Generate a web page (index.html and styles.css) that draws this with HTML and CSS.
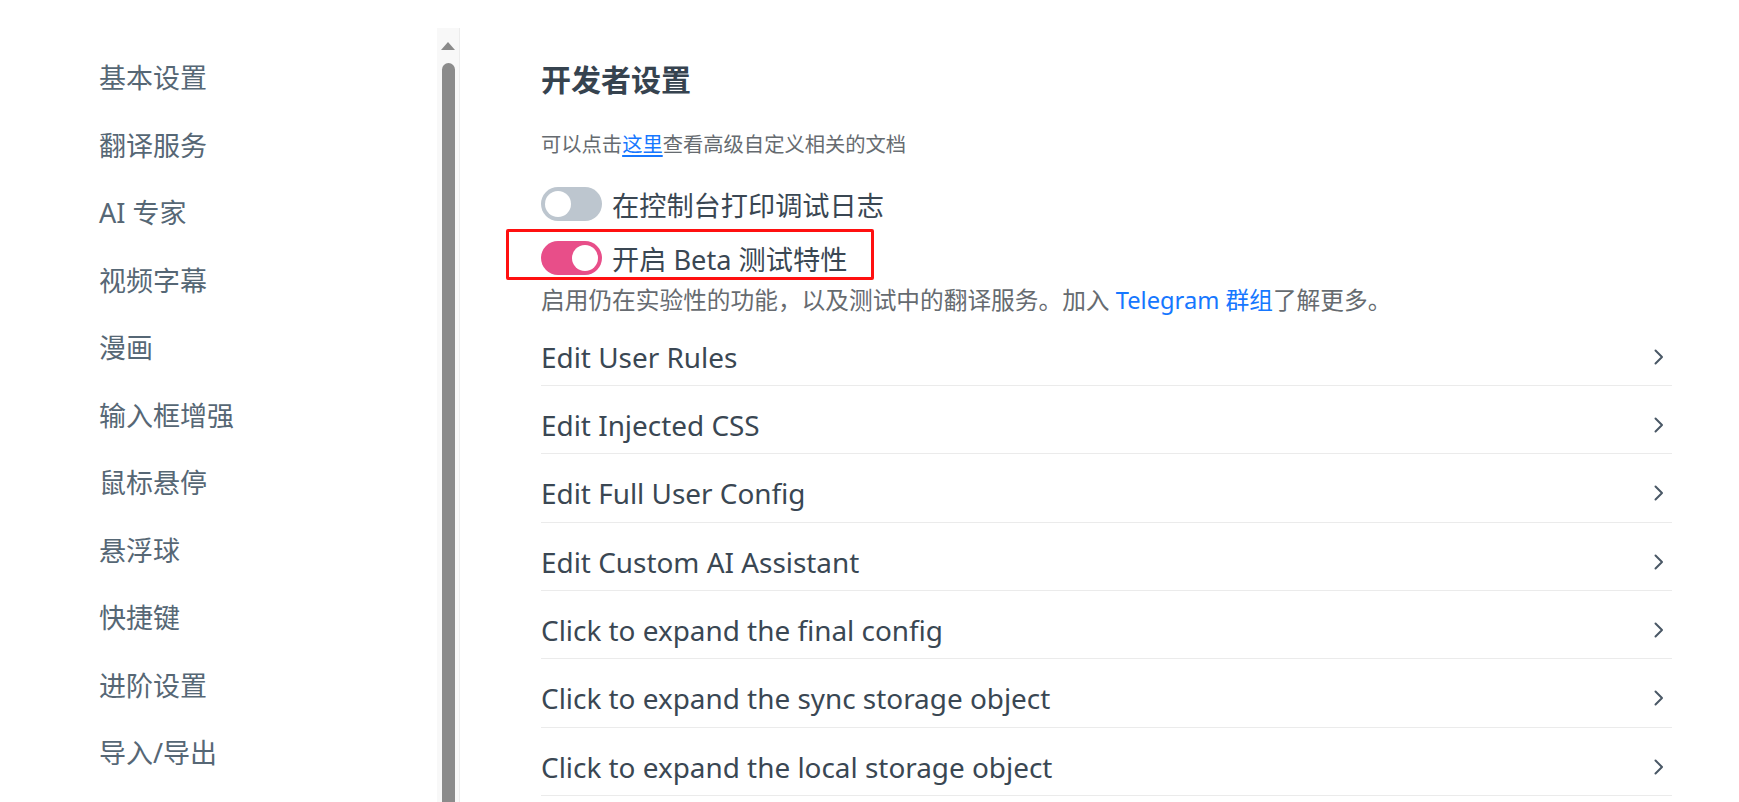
FILE: index.html
```html
<!DOCTYPE html>
<html lang="zh-CN">
<head>
<meta charset="utf-8">
<title>开发者设置</title>
<link rel="stylesheet" href="styles.css">
</head>
<body>
<div class="page">
  <aside class="sidebar">
    <nav class="nav">
      <a class="nav-item">基本设置</a>
      <a class="nav-item">翻译服务</a>
      <a class="nav-item">AI 专家</a>
      <a class="nav-item">视频字幕</a>
      <a class="nav-item">漫画</a>
      <a class="nav-item">输入框增强</a>
      <a class="nav-item">鼠标悬停</a>
      <a class="nav-item">悬浮球</a>
      <a class="nav-item">快捷键</a>
      <a class="nav-item">进阶设置</a>
      <a class="nav-item">导入/导出</a>
    </nav>
    <div class="scrollbar">
      <div class="sb-arrow"></div>
      <div class="sb-thumb"></div>
    </div>
  </aside>
  <main class="main">
    <h1 class="title">开发者设置</h1>
    <p class="hint">可以点击<a class="link underline">这里</a>查看高级自定义相关的文档</p>
    <div class="toggle-row">
      <span class="switch"><span class="knob"></span></span>
      <span class="toggle-label">在控制台打印调试日志</span>
    </div>
    <div class="toggle-row second">
      <span class="switch on"><span class="knob"></span></span>
      <span class="toggle-label">开启 Beta 测试特性</span>
      <span class="highlight"></span>
    </div>
    <p class="desc">启用仍在实验性的功能，以及测试中的翻译服务。加入 <a class="link">Telegram 群组</a>了解更多。</p>
    <ul class="list">
      <li class="row"><span>Edit User Rules</span><svg class="chev" viewBox="0 0 10 16"><path d="M1.5 1.5 L8 8 L1.5 14.5"/></svg></li>
      <li class="row"><span>Edit Injected CSS</span><svg class="chev" viewBox="0 0 10 16"><path d="M1.5 1.5 L8 8 L1.5 14.5"/></svg></li>
      <li class="row"><span>Edit Full User Config</span><svg class="chev" viewBox="0 0 10 16"><path d="M1.5 1.5 L8 8 L1.5 14.5"/></svg></li>
      <li class="row"><span>Edit Custom AI Assistant</span><svg class="chev" viewBox="0 0 10 16"><path d="M1.5 1.5 L8 8 L1.5 14.5"/></svg></li>
      <li class="row"><span>Click to expand the final config</span><svg class="chev" viewBox="0 0 10 16"><path d="M1.5 1.5 L8 8 L1.5 14.5"/></svg></li>
      <li class="row"><span>Click to expand the sync storage object</span><svg class="chev" viewBox="0 0 10 16"><path d="M1.5 1.5 L8 8 L1.5 14.5"/></svg></li>
      <li class="row"><span>Click to expand the local storage object</span><svg class="chev" viewBox="0 0 10 16"><path d="M1.5 1.5 L8 8 L1.5 14.5"/></svg></li>
    </ul>
  </main>
</div>
</body>
</html>
```

FILE: styles.css
```css
html, body {
  margin: 0;
  padding: 0;
  background: #ffffff;
}
body {
  font-family: "Noto Sans", "Noto Sans CJK SC", sans-serif;
  color: #3a4753;
}
.page {
  display: flex;
  height: 802px;
  overflow: hidden;
}
.sidebar {
  flex: none;
  width: 460px;
  margin-top: 28px;
  display: flex;
  overflow: hidden;
}
.nav {
  flex: 1;
  padding: 16px 0 0 99px;
  overflow: hidden;
}
.nav-item {
  display: block;
  height: 67.55px;
  line-height: 67.55px;
  font-size: 27px;
  color: #566775;
  white-space: nowrap;
}
.scrollbar {
  flex: none;
  width: 22px;
  background: #f8f8f8;
  border-right: 1px solid #ececec;
  display: flex;
  flex-direction: column;
  align-items: center;
}
.sb-arrow {
  width: 0;
  height: 0;
  margin-top: 14px;
  border-left: 7.5px solid transparent;
  border-right: 7.5px solid transparent;
  border-bottom: 8px solid #8a8a8a;
}
.sb-thumb {
  flex: 1;
  width: 13px;
  margin-top: 13px;
  background: #8b8b8b;
  border-radius: 6.5px 6.5px 0 0;
}
.main {
  flex: 1;
  padding: 60px 67px 0 81px;
  min-width: 0;
}
.title {
  margin: 0;
  font-size: 30px;
  line-height: 40px;
  font-weight: 700;
  color: #36434f;
}
.hint {
  margin: 29.5px 0 0;
  font-size: 20.3px;
  line-height: 28px;
  color: #666b70;
}
.link {
  color: #1677ff;
}
.link.underline {
  text-decoration: underline;
  text-underline-offset: 3px;
}
.toggle-row {
  display: flex;
  align-items: center;
  gap: 10px;
  height: 34px;
  margin-top: 29.5px;
  font-size: 27.2px;
  color: #3a4753;
}
.toggle-row.second {
  margin-top: 20px;
  position: relative;
}
.switch {
  flex: none;
  width: 61px;
  height: 34px;
  box-sizing: border-box;
  padding: 4px;
  border-radius: 17px;
  background: #bdc6cf;
  display: flex;
  align-items: center;
}
.switch.on {
  background: #e84e89;
  justify-content: flex-end;
}
.knob {
  width: 26px;
  height: 26px;
  border-radius: 50%;
  background: #ffffff;
}
.toggle-label {
  white-space: nowrap;
}
.highlight {
  position: absolute;
  left: -35px;
  top: -12px;
  width: 368px;
  height: 51px;
  box-sizing: border-box;
  border: 3.5px solid #ff1010;
  border-radius: 2px;
  pointer-events: none;
}
.desc {
  margin: 8.5px 0 0;
  font-size: 23.7px;
  line-height: 32px;
  color: #666b70;
  white-space: nowrap;
}
.list {
  list-style: none;
  margin: 2px 0 0;
  padding: 0;
}
.row {
  display: flex;
  align-items: center;
  justify-content: space-between;
  padding: 21px 8px 10.4px 0;
  line-height: 36px;
  font-size: 27.9px;
  color: #3a4753;
  border-bottom: 1px solid #ebebeb;
}
.chev {
  flex: none;
  width: 10px;
  height: 16px;
  fill: none;
  stroke: #4a5866;
  stroke-width: 2;
  stroke-linecap: round;
  stroke-linejoin: round;
}
```
